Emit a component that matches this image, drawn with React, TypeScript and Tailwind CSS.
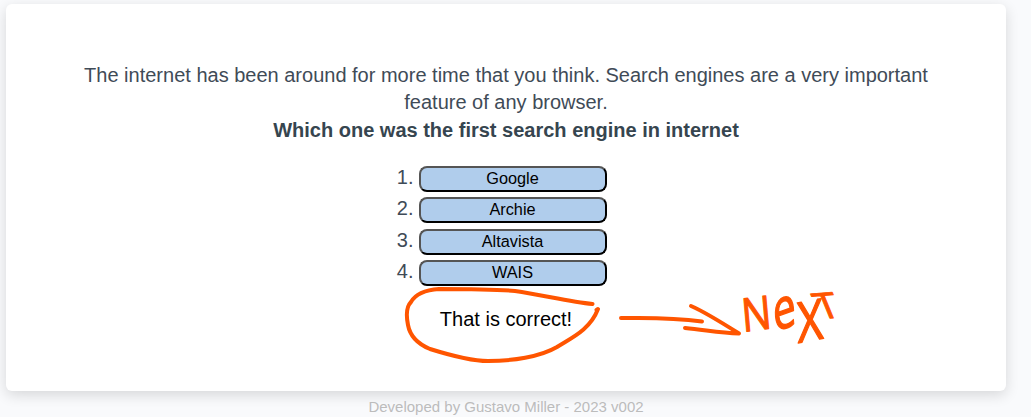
const answers = ["Google", "Archie", "Altavista", "WAIS"];

function Annotations() {
  return (
    <svg
      className="pointer-events-none absolute inset-0"
      width="1031"
      height="417"
      viewBox="0 0 1031 417"
      fill="none"
      stroke="#ff5500"
      strokeWidth="4"
      strokeLinecap="round"
      strokeLinejoin="round"
    >
      <path d="M592.5 304C570 302 543 295 515 291C492 289 458 289 439 289C425 290 415 295 411 302C406 307 406 315 408 325C410 336 418 344 430 349C446 354 470 361 488 361C512 361 540 357 557 347C571 338 590 330 598 309L596.5 310" />
      <path d="M621 318C648 318 670 317 702 321.500" />
      <path d="M691 306C705 312 724 324 739 333.500C720 333 706 330 685 328" />
      <g fill="#ff5500" strokeWidth="1" className="font-['Open_Sans',sans-serif] text-[40px]">
        <text transform="matrix(0.98 -0.13 0.1 1.15 743 332)">N</text>
        <text transform="matrix(1 -0.36 0.12 1.4 774.500 332)">e</text>
        <text transform="matrix(1.12 -0.2 0.06 1.4 798 343)">X</text>
        <text transform="matrix(1.02 -0.08 0.36 0.88 820.500 319)">T</text>
      </g>
    </svg>
  );
}

export default function App() {
  return (
    <div className="relative h-[417px] w-[1031px] overflow-hidden bg-[#f9fafc] font-['Liberation_Sans',Arial,sans-serif]">
      <div className="pt-1 pl-1.5">
        <main className="flex h-[387px] w-[1000px] flex-col items-center rounded-md bg-white pt-[58px] shadow-[0_4px_14px_rgba(0,0,0,0.14)]">
          <div className="w-[880px] text-center text-[20px] leading-[27.3px] text-[#3f4b57]">
            <p>
              The internet has been around for more time that you think. Search engines are a very important feature of
              any browser.
            </p>
            <p className="font-bold text-[#36454f]">Which one was the first search engine in internet</p>
          </div>
          <ol className="mt-[20.1px] mr-[10px] flex flex-col text-[20px] text-[#3f4b57]">
            {answers.map((answer, index) => (
              <li key={answer} className="flex h-[31.4px] items-start gap-[5px]">
                <span className="w-[18px] text-right leading-[27px]">{index + 1}.</span>
                <button className="mt-0.5 h-[26px] w-[188px] rounded-lg border-2 border-t-[#555] border-r-black border-b-black border-l-[#555] bg-[#b0cdec] pb-0.5 text-[16.3px] leading-5 text-black">
                  {answer}
                </button>
              </li>
            ))}
          </ol>
          <p className="mt-[16.5px] text-[20px] leading-[27px] text-black">That is correct!</p>
        </main>
        <footer className="w-[1000px] pt-1.5 text-center text-[15px] leading-5 text-[#bcbcbc]">
          Developed by Gustavo Miller - 2023 v002
        </footer>
      </div>
      <Annotations />
    </div>
  );
}
